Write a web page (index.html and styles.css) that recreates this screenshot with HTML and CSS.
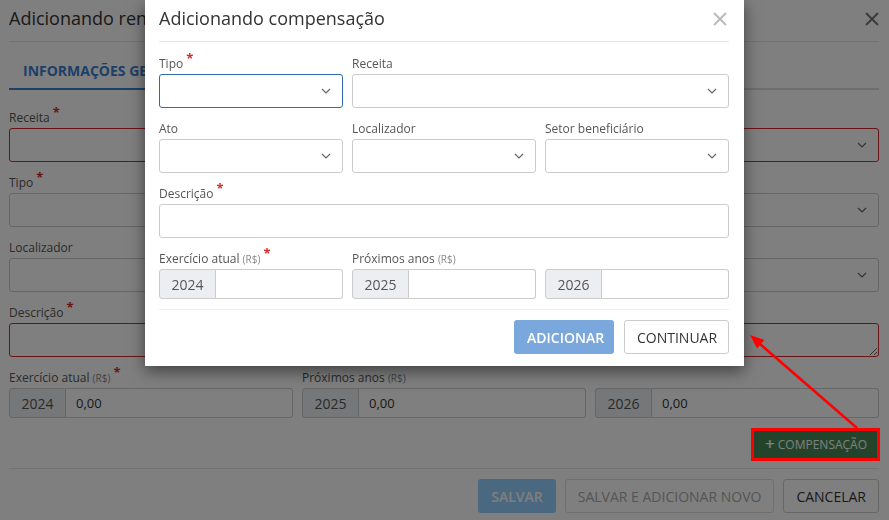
FILE: index.html
```html
<!DOCTYPE html>
<html lang="pt-BR">
<head>
  <meta charset="UTF-8">
  <meta name="viewport" content="width=device-width, initial-scale=1.0">
  <title>Adicionando compensação</title>
  <link rel="stylesheet" href="styles.css">
</head>
<body>
  <!-- Background form (dimmed by the overlay) -->
  <div class="page">
    <div class="page-header">
      <h1>Adicionando renúncia de receita</h1>
      <svg class="close-icon page-close" width="14" height="14" viewBox="0 0 14 14"><path d="M1 1L13 13M13 1L1 13"/></svg>
    </div>

    <div class="tabs">
      <div class="tab active">INFORMAÇÕES GERAIS</div>
    </div>

    <div class="page-form">
      <div class="field">
        <label>Receita <span class="req">*</span></label>
        <div class="control error">
          <svg class="chevron" width="10" height="6" viewBox="0 0 10 6"><path d="M1 1L5 5L9 1"/></svg>
        </div>
      </div>
      <div class="field">
        <label>Tipo <span class="req">*</span></label>
        <div class="control">
          <svg class="chevron" width="10" height="6" viewBox="0 0 10 6"><path d="M1 1L5 5L9 1"/></svg>
        </div>
      </div>
      <div class="field">
        <label>Localizador</label>
        <div class="control">
          <svg class="chevron" width="10" height="6" viewBox="0 0 10 6"><path d="M1 1L5 5L9 1"/></svg>
        </div>
      </div>
      <div class="field">
        <label>Descrição <span class="req">*</span></label>
        <textarea class="control error textarea"></textarea>
      </div>
      <div class="grid3">
        <div class="field">
          <label>Exercício atual <small>(R$)</small> <span class="req">*</span></label>
          <div class="input-group"><span class="addon">2024</span><span class="value">0,00</span></div>
        </div>
        <div class="field">
          <label>Próximos anos <small>(R$)</small></label>
          <div class="input-group"><span class="addon">2025</span><span class="value">0,00</span></div>
        </div>
        <div class="field">
          <label>&nbsp;</label>
          <div class="input-group"><span class="addon">2026</span><span class="value">0,00</span></div>
        </div>
      </div>
      <div class="page-actions">
        <button class="btn btn-success"><span class="plus">+</span> COMPENSAÇÃO</button>
      </div>
    </div>

    <div class="page-footer">
      <button class="btn btn-primary">SALVAR</button>
      <button class="btn btn-default disabled">SALVAR E ADICIONAR NOVO</button>
      <button class="btn btn-default">CANCELAR</button>
    </div>
  </div>

  <div class="overlay"></div>

  <!-- Modal -->
  <div class="modal">
    <div class="modal-header">
      <h2>Adicionando compensação</h2>
      <svg class="close-icon" width="14" height="14" viewBox="0 0 14 14"><path d="M1 1L13 13M13 1L1 13"/></svg>
    </div>
    <div class="modal-body">
      <div class="grid3">
        <div class="field">
          <label>Tipo <span class="req">*</span></label>
          <div class="control focus">
            <svg class="chevron" width="10" height="6" viewBox="0 0 10 6"><path d="M1 1L5 5L9 1"/></svg>
          </div>
        </div>
        <div class="field span2">
          <label>Receita</label>
          <div class="control">
            <svg class="chevron" width="10" height="6" viewBox="0 0 10 6"><path d="M1 1L5 5L9 1"/></svg>
          </div>
        </div>
        <div class="field">
          <label>Ato</label>
          <div class="control">
            <svg class="chevron" width="10" height="6" viewBox="0 0 10 6"><path d="M1 1L5 5L9 1"/></svg>
          </div>
        </div>
        <div class="field">
          <label>Localizador</label>
          <div class="control">
            <svg class="chevron" width="10" height="6" viewBox="0 0 10 6"><path d="M1 1L5 5L9 1"/></svg>
          </div>
        </div>
        <div class="field">
          <label>Setor beneficiário</label>
          <div class="control">
            <svg class="chevron" width="10" height="6" viewBox="0 0 10 6"><path d="M1 1L5 5L9 1"/></svg>
          </div>
        </div>
        <div class="field span3">
          <label>Descrição <span class="req">*</span></label>
          <div class="control"></div>
        </div>
        <div class="field">
          <label>Exercício atual <small>(R$)</small> <span class="req">*</span></label>
          <div class="input-group"><span class="addon">2024</span><span class="value"></span></div>
        </div>
        <div class="field">
          <label>Próximos anos <small>(R$)</small></label>
          <div class="input-group"><span class="addon">2025</span><span class="value"></span></div>
        </div>
        <div class="field">
          <label>&nbsp;</label>
          <div class="input-group"><span class="addon">2026</span><span class="value"></span></div>
        </div>
      </div>
    </div>
    <div class="modal-footer">
      <button class="btn btn-primary disabled">ADICIONAR</button>
      <button class="btn btn-default">CONTINUAR</button>
    </div>
  </div>

  <!-- Annotation: red box and arrow -->
  <svg class="annotation" width="889" height="520" viewBox="0 0 889 520">
    <rect x="752.5" y="429.5" width="126" height="30" fill="none" stroke="#ff0000" stroke-width="3"/>
    <line x1="857" y1="428" x2="760" y2="344" stroke="#ff0000" stroke-width="2.5"/>
    <polygon points="750,335 757,348.5 764.5,340" fill="#ff0000"/>
  </svg>
</body>
</html>
```

FILE: styles.css
```css
:root {
  --primary-color: #3a80d2;
  --border-color: #ccc;
  --label-color: #555;
  --danger-color: #d42a2a;
}

body {
  margin: 0;
  font-family: 'Open Sans', 'Noto Sans', sans-serif;
  background-color: #fff;
  color: #333;
  overflow: hidden;
}

/* Background page */
.page {
  padding: 0 10px 0 9px;
}

.page-header,
.modal-header {
  display: flex;
  justify-content: space-between;
  align-items: flex-start;
  height: 42px;
  box-sizing: border-box;
  border-bottom: 1px solid #e5e5e5;
}

.page-header h1,
.modal-header h2 {
  margin: 0;
  font-size: 18px;
  line-height: 36px;
  font-weight: 400;
  color: #333;
  white-space: nowrap;
}

.close-icon {
  margin-top: 12px;
}

.close-icon path {
  stroke: #bbb;
  stroke-width: 2;
  fill: none;
}

.page-close path {
  stroke: #777;
}

.tabs {
  display: flex;
  margin-top: 10px;
  border-bottom: 2px solid #ddd;
}

.tab {
  padding: 10px 14px 8px;
  font-size: 14px;
  line-height: 18px;
  font-weight: 700;
  color: var(--primary-color);
  border-bottom: 2px solid var(--primary-color);
  margin-bottom: -2px;
  width: 240px;
}

.page-form {
  padding-top: 18px;
}

.field {
  margin-bottom: 11px;
  min-width: 0;
}

.field label {
  display: block;
  height: 18px;
  font-size: 12px;
  line-height: 20px;
  color: var(--label-color);
  margin-bottom: 2px;
  white-space: nowrap;
}

.field label small {
  font-size: 10px;
  color: #888;
}

.req {
  color: var(--danger-color);
  font-weight: 700;
  font-size: 13px;
  line-height: 0;
  position: relative;
  top: -5px;
}

.control {
  display: flex;
  align-items: center;
  justify-content: flex-end;
  height: 34px;
  box-sizing: border-box;
  padding: 0 11px;
  border: 1px solid var(--border-color);
  border-radius: 3px;
  background: #fff;
}

.control.error {
  border-color: var(--danger-color);
}

.control.focus {
  border-color: #2f6bb0;
}

.textarea {
  display: block;
  width: 100%;
  resize: vertical;
  font-family: inherit;
}

.chevron path {
  stroke: #666;
  stroke-width: 1.2;
  fill: none;
}

.grid3 {
  display: grid;
  grid-template-columns: repeat(3, 1fr);
  column-gap: 9px;
}

.span2 {
  grid-column: span 2;
}

.span3 {
  grid-column: span 3;
}

.input-group {
  display: flex;
  height: 30px;
}

.addon {
  display: flex;
  align-items: center;
  justify-content: center;
  width: 57px;
  flex-shrink: 0;
  box-sizing: border-box;
  border: 1px solid var(--border-color);
  border-radius: 3px 0 0 3px;
  background: #eceef1;
  font-size: 14px;
  color: #555;
}

.value {
  display: flex;
  align-items: center;
  flex: 1;
  padding-left: 10px;
  border: 1px solid var(--border-color);
  border-left: none;
  border-radius: 0 3px 3px 0;
  background: #fff;
  font-size: 13px;
  color: #333;
}

.page-actions {
  display: flex;
  justify-content: flex-end;
}

.page-footer {
  display: flex;
  justify-content: flex-end;
  gap: 9px;
  margin-top: 8px;
  padding-top: 10px;
  border-top: 1px solid #e5e5e5;
}

/* Buttons */
.btn {
  height: 34px;
  padding: 0 12px;
  border: 1px solid transparent;
  border-radius: 3px;
  font-family: inherit;
  font-size: 14px;
  cursor: pointer;
}

.btn-primary {
  background-color: #7ba8dc;
  color: #fff;
  font-weight: 600;
}

.page-footer .btn-primary {
  background-color: #94d0ff;
}

.btn-default {
  background-color: #fff;
  color: #333;
  border-color: var(--border-color);
}

.btn-default.disabled {
  color: #aaa;
  border-color: #ddd;
}

.btn-success {
  height: 31px;
  width: 126px;
  padding: 0 6px;
  background-color: #478656;
  color: #ffffff;
  font-size: 12px;
}

.btn-success .plus {
  font-size: 17px;
  font-weight: 600;
  line-height: 0;
  position: relative;
  top: 1px;
}

/* Overlay and modal */
.overlay {
  position: fixed;
  inset: 0;
  background-color: rgba(0, 0, 0, 0.5);
}

.modal {
  position: absolute;
  top: 0;
  left: 145px;
  width: 599px;
  height: 366px;
  box-sizing: border-box;
  padding: 0 15px 0 14px;
  background-color: #fff;
  box-shadow: 0 5px 15px rgba(0, 0, 0, 0.5);
}

.modal-header .close-icon {
  margin-right: 2px;
}

.modal-body {
  padding-top: 12px;
}

.modal-footer {
  display: flex;
  justify-content: flex-end;
  gap: 10px;
  margin-top: -1px;
  padding-top: 10px;
  border-top: 1px solid #eee;
}

.modal-footer .btn-primary {
  width: 100px;
}

.modal-footer .btn-default {
  width: 105px;
}

.annotation {
  position: absolute;
  top: 0;
  left: 0;
  pointer-events: none;
}
```
